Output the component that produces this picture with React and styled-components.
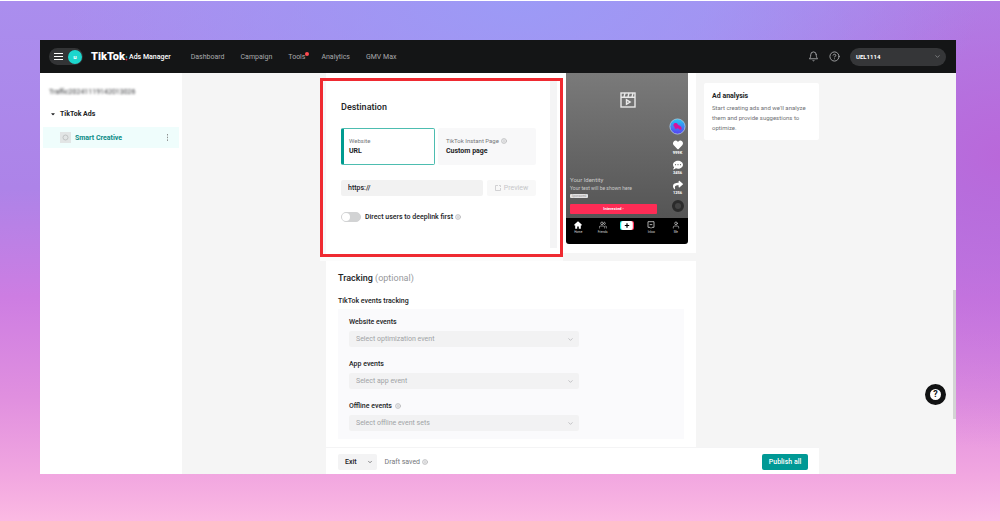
import { useState } from "react";
import styled, { createGlobalStyle } from "styled-components";
import { FiBell, FiHelpCircle, FiChevronDown, FiInfo, FiUser, FiUsers } from "react-icons/fi";
import { FaHeart, FaCommentDots, FaShare, FaCaretDown } from "react-icons/fa";

const GlobalStyle = createGlobalStyle`
  * {
    box-sizing: border-box;
  }
  body {
    margin: 0;
    font-family: Roboto, "Liberation Sans", sans-serif;
    font-size: 7px;
    line-height: 10px;
    color: #222325;
  }
  h1, h2, h3, p {
    margin: 0;
  }
  button, input, select {
    font: inherit;
    color: inherit;
    border: none;
    margin: 0;
    padding: 0;
  }
  button {
    cursor: pointer;
  }
  svg {
    display: block;
    flex-shrink: 0;
  }
`;

const Page = styled.div`
  min-height: 100vh;
  border-top: 1px solid white;
  padding: 39px 44px 47px 40px;
  background:
    radial-gradient(ellipse 46% 42% at 52% 0%, #9c9af6 0%, rgba(156, 154, 246, 0) 100%),
    radial-gradient(ellipse 34% 56% at 100% 30%, #b968da 0%, rgba(185, 104, 218, 0) 100%),
    linear-gradient(to bottom, #aa8eee 0%, #ad83e8 36%, #cd7de2 57%, #e08fdf 76%, #f1a6e0 91%, #fbb9e2 100%);
`;

const AppWindow = styled.div`
  background-color: #f5f5f5;
  position: relative;
`;

const Header = styled.header`
  height: 33px;
  background-color: #141516;
  color: #a9aaac;
  display: flex;
  align-items: center;
  padding: 0 10px 0 9px;
`;

const MenuButton = styled.button`
  height: 17px;
  border-radius: 9px;
  background-color: #333436;
  display: flex;
  align-items: center;
  gap: 5px;
  padding: 0 1px 0 5px;
  color: white;
`;

const Avatar = styled.span`
  width: 14px;
  height: 14px;
  border-radius: 50%;
  background-color: #1cd6cd;
  font-size: 6px;
  line-height: 14px;
  font-weight: 700;
  text-align: center;
`;

const Logo = styled.div`
  display: flex;
  align-items: center;
  margin-left: 8px;
  color: white;
  font-weight: 500;
`;

const Brand = styled.span`
  font-size: 11px;
  font-weight: 900;
`;

const Nav = styled.nav`
  display: flex;
  gap: 16px;
  margin-left: 20px;
  flex: 1;
`;

const NavLink = styled.a`
  color: inherit;
  text-decoration: none;
  position: relative;
`;

const Dot = styled.span`
  position: absolute;
  top: 0;
  right: -4px;
  width: 4px;
  height: 4px;
  border-radius: 50%;
  background-color: #fe4a4f;
`;

const HeaderActions = styled.div`
  display: flex;
  align-items: center;
  gap: 10px;
`;

const IconButton = styled.button`
  background: none;
`;

const Account = styled.button`
  width: 96px;
  height: 18px;
  border-radius: 9px;
  background-color: #353638;
  color: white;
  font-size: 6px;
  font-weight: 700;
  display: flex;
  align-items: center;
  justify-content: space-between;
  padding: 0 5px 0 6px;

  svg {
    color: #a9aaac;
  }
`;

const Body = styled.div`
  display: flex;
`;

const Sidebar = styled.aside`
  width: 142px;
  background-color: white;
  padding: 14px 3px 0;
`;

const CampaignName = styled.p`
  padding-left: 6px;
  color: #333437;
  filter: blur(1px);
`;

const Group = styled.div`
  display: flex;
  align-items: center;
  gap: 4px;
  margin-top: 12px;
  padding-left: 7px;
  font-weight: 700;
`;

const AdItem = styled.div`
  display: flex;
  align-items: center;
  gap: 4px;
  height: 21px;
  margin-top: 8px;
  padding: 0 9px 0 17px;
  background-color: #effdfc;
  color: #0a8b86;
  font-weight: 700;
`;

const Thumb = styled.span`
  width: 11px;
  height: 11px;
  background-color: #e2e5e5;
  display: flex;
  align-items: center;
  justify-content: center;
  color: #b3b6b6;
`;

const MoreButton = styled.button`
  background: none;
  margin-left: auto;
  color: #8d9090;
`;

const Main = styled.main`
  flex: 1;
  display: flex;
  justify-content: center;
  padding-left: 7px;
`;

const Workspace = styled.div`
  width: 100%;
  max-width: 493px;
`;

const Columns = styled.div`
  display: flex;
  align-items: flex-start;
  gap: 8px;
`;

const Column = styled.div`
  flex: 1;
`;

const TopRow = styled.section`
  display: flex;
  align-items: flex-start;
  background-color: white;
  padding: 0 8px 9px 0;
  margin-bottom: 8px;
`;

const Highlight = styled.div`
  flex: 1;
  display: flex;
  margin: 5px 3px -13px -6px;
  border: 3px solid #ef2a31;
  background-color: white;
  box-shadow: 0 4px #fcfcfc;
  position: relative;
`;

const Gutter = styled.div`
  width: 7px;
  margin: 0 3px 6px 0;
  background-color: #f4f4f5;
`;

const Destination = styled.form`
  flex: 1;
  border-left: 3px solid #f7f7fa;
  padding: 20px 14px 32px 15px;
`;

const Title = styled.h2`
  font-size: 9px;
  line-height: 12px;
  font-weight: 500;
`;

const Muted = styled.span`
  color: #97999c;
  font-weight: 400;
`;

const Options = styled.div`
  display: grid;
  grid-template-columns: 47fr 49fr;
  gap: 3px;
  margin-top: 15px;
`;

const Option = styled.label`
  height: 37px;
  padding: 7px 0 0 5px;
  border-radius: 2px;
  border: 1px solid ${(props) => (props.$active ? "#4dbdb0" : "#f8f8f9")};
  border-left: 3px solid ${(props) => (props.$active ? "#009b90" : "#f8f8f9")};
  background-color: ${(props) => (props.$active ? "white" : "#f8f8f9")};
  font-weight: 700;
  cursor: pointer;

  input {
    position: absolute;
    opacity: 0;
  }
`;

const OptionHint = styled.span`
  display: flex;
  align-items: center;
  gap: 2px;
  font-size: 6px;
  font-weight: 400;
  color: #77797c;
`;

const UrlRow = styled.div`
  display: flex;
  gap: 4px;
  margin-top: 15px;
`;

const UrlInput = styled.input`
  flex: 1;
  min-width: 0;
  height: 16px;
  padding: 0 7px;
  border-radius: 2px;
  background-color: #f2f2f2;
  font-weight: 500;
`;

const PreviewButton = styled.button`
  width: 49px;
  height: 16px;
  border-radius: 2px;
  background-color: #f8f8f8;
  color: #c6c7c9;
  display: flex;
  align-items: center;
  justify-content: center;
  gap: 3px;
`;

const SwitchRow = styled.label`
  display: flex;
  align-items: center;
  margin-top: 16px;
  font-weight: 500;
`;

const Switch = styled.input`
  appearance: none;
  width: 20px;
  height: 10px;
  margin-right: 4px;
  border-radius: 5px;
  background-color: #d2d3d4;
  border: 1px solid #d2d3d4;
  display: flex;

  &::before {
    content: "";
    width: 8px;
    height: 8px;
    border-radius: 50%;
    background-color: white;
  }
  &:checked {
    background-color: #009995;
    border-color: #009995;
    justify-content: flex-end;
  }
`;

const InfoIcon = styled(FiInfo)`
  width: 6px;
  height: 6px;
  color: #a5a7a9;
  fill: #ebebec;
`;

const Phone = styled.div`
  width: 122px;
  border-radius: 0 0 3px 3px;
  overflow: hidden;
  background-color: black;
  color: white;
`;

const Screen = styled.div`
  height: 145px;
  padding: 19px 2px 6px 4px;
  background: linear-gradient(to bottom, #7a7a7a, #555555);
  display: flex;
  flex-direction: column;
  align-items: center;
  justify-content: space-between;
`;

const Overlay = styled.div`
  align-self: stretch;
  display: flex;
  align-items: flex-end;
  justify-content: space-between;
`;

const Caption = styled.div`
  width: 87px;
  margin-bottom: -2px;
  font-size: 5px;
  line-height: 8px;
  color: #c9c9c9;
`;

const Identity = styled.p`
  font-size: 6px;
`;

const CaptionText = styled.p`
  font-size: 5px;
`;

const Sponsored = styled.span`
  display: block;
  width: 18px;
  height: 4px;
  margin: 2px 0 6px;
  border-radius: 1px;
  background-color: #e2e2e2;
  color: #999999;
  font-size: 3px;
  line-height: 4px;
  text-align: center;
`;

const Interested = styled.button`
  display: block;
  width: 100%;
  height: 10px;
  border-radius: 1px;
  background-color: #fe2c55;
  color: white;
  font-size: 4px;
  font-weight: 700;
`;

const Rail = styled.div`
  width: 17px;
  display: flex;
  flex-direction: column;
  align-items: center;
  gap: 5px;
`;

const RailItem = styled.span`
  display: flex;
  flex-direction: column;
  align-items: center;
  font-size: 4px;
  font-weight: 700;
  line-height: 5px;
`;

const Disc = styled.span`
  width: 12px;
  height: 12px;
  border-radius: 50%;
  border: 3px solid #2b2b2b;
  background-color: #444444;
`;

const Tabs = styled.div`
  height: 26px;
  padding: 3px 0 0;
  display: flex;
`;

const Tab = styled.span`
  flex: 1;
  display: flex;
  flex-direction: column;
  align-items: center;
  gap: 1px;
  font-size: 3px;
  line-height: 4px;
  color: #d5d5d5;
`;

const Tracking = styled.section`
  background-color: white;
  padding: 11px 12px 8px;
`;

const SubTitle = styled.h3`
  margin: 12px 0 3px;
  font-size: 7px;
  font-weight: 500;
`;

const Events = styled.div`
  display: flex;
  flex-direction: column;
  gap: 12px;
  padding: 8px 11px;
  background-color: #fafafc;
`;

const FieldLabel = styled.label`
  display: flex;
  align-items: center;
  gap: 3px;
  font-weight: 500;
`;

const SelectBox = styled.div`
  display: flex;
  align-items: center;
  width: 100%;
  max-width: 230px;
  height: 16px;
  margin-top: 4px;
  padding-right: 5px;
  border-radius: 2px;
  background-color: #f2f2f3;
  color: #a0a2a5;
`;

const Select = styled.select`
  appearance: none;
  flex: 1;
  height: 16px;
  padding-left: 7px;
  background: none;
`;

const Analysis = styled.aside`
  width: 115px;
  margin-top: 10px;
  padding: 8px 8px 7px;
  border-radius: 2px;
  background-color: white;
`;

const AnalysisTitle = styled.h3`
  font-size: 7px;
  font-weight: 700;
  margin-bottom: 2px;
`;

const AnalysisText = styled.p`
  font-size: 6px;
  color: #6f7174;
`;

const Footer = styled.footer`
  display: flex;
  align-items: center;
  height: 27px;
  padding: 2px 11px 0 12px;
  border-top: 1px solid #f4f4f5;
  background-color: white;
`;

const Split = styled.div`
  display: flex;
  height: 16px;
  border-radius: 2px;
  background-color: #f3f3f4;
`;

const SplitButton = styled.button`
  background: none;
  padding: 0 4px 0 ${(props) => (props.$caret ? "6px" : "7px")};
  font-weight: 500;
`;

const Draft = styled.p`
  display: flex;
  align-items: center;
  gap: 2px;
  margin-left: 8px;
  color: #76787b;
`;

const Publish = styled.button`
  width: 46px;
  height: 16px;
  margin-left: auto;
  border-radius: 2px;
  background-color: #009995;
  color: white;
  font-weight: 500;
`;

const HelpButton = styled.button`
  position: absolute;
  right: 10px;
  bottom: 69px;
  width: 21px;
  height: 21px;
  border-radius: 50%;
  border: 5px solid #111213;
  background-color: white;
  color: #111213;
  font-size: 9px;
  line-height: 11px;
  font-weight: 700;
`;

const ScrollThumb = styled.div`
  position: absolute;
  right: 0;
  bottom: 55px;
  width: 3px;
  height: 129px;
  background-color: #d3d4d4;
`;

const navItems = ["Dashboard", "Campaign", "Tools", "Analytics", "GMV Max"];

const events = [
  { id: "website", label: "Website events", placeholder: "Select optimization event" },
  { id: "app", label: "App events", placeholder: "Select app event" },
  { id: "offline", label: "Offline events", placeholder: "Select offline event sets", info: true },
];

const MenuIcon = () => (
  <svg width="9" height="8" viewBox="0 0 9 8" stroke="currentColor">
    <path d="M0 .5h9M0 3.5h9M0 6.500h9" />
  </svg>
);

const LogoMark = () => (
  <svg width="4" height="8" viewBox="0 0 4 8">
    <circle cx="1.500" cy="4" r="0.9" fill="#2ba5a8" />
    <circle cx="1.500" cy="6.500" r="0.9" fill="#d02a4e" />
  </svg>
);

const ClipIcon = () => (
  <svg width="16" height="16" viewBox="0 0 16 16" fill="none" stroke="#e8e8e8" strokeWidth="1.4">
    <rect x="1" y="1" width="14" height="14" />
    <path d="M1 5.2h14M5 1l-1 4M9 1L8 5M13 1l-1 4" />
    <path d="M6.5 7.8v4.4l3.6-2.2z" />
  </svg>
);

const ProfileIcon = () => (
  <svg width="17" height="17" viewBox="0 0 17 17">
    <defs>
      <linearGradient id="profile" x1="0" y1="0" x2="0" y2="1">
        <stop offset="0" stopColor="#22cdf5" />
        <stop offset="1" stopColor="#5a3df2" />
      </linearGradient>
    </defs>
    <circle cx="8.5" cy="8.5" r="7.6" fill="url(#profile)" stroke="#a9c8e8" strokeWidth="0.8" />
    <path d="M4.500 6.500c1-2 3.500-1.800 4.200-.2.500 1.200 1.800 1 2.800 1.900 1.200 1 1.500 2.600.6 3.300-1 .7-2-.2-2.800-1-.8-.7-1.400.6-2.600.4-1.200-.2-.8-1.500-1.500-2.300-.5-.6-1.100-1.200-.7-2.100z" fill="#d6129c" />
  </svg>
);

const PreviewIcon = () => (
  <svg width="6" height="6" viewBox="0 0 6 6" fill="none" stroke="currentColor" strokeWidth="0.8">
    <path d="M3 .5H.5v5h5V3M4 .5h1.500V2" />
  </svg>
);

const HomeIcon = () => (
  <svg width="8" height="8" viewBox="0 0 8 8" fill="white">
    <path d="M4 .3L.3 3.500V4.500h.9v3.200h2V5.500h1.600v2.200h2V4.500h.9V3.500z" />
  </svg>
);

const AddIcon = () => (
  <svg width="14" height="9" viewBox="0 0 14 9">
    <rect x="0" width="10" height="9" rx="2" fill="#25f4ee" />
    <rect x="4" width="10" height="9" rx="2" fill="#fe2c55" />
    <rect x="1.200" width="11.600" height="9" rx="2" fill="white" />
    <path d="M7 2.300v4.400M4.800 4.500h4.400" stroke="black" strokeWidth="1.200" />
  </svg>
);

const InboxIcon = () => (
  <svg width="8" height="8" viewBox="0 0 7 8" fill="none" stroke="#d5d5d5" strokeWidth="0.8">
    <path d="M.5.7h6v5.600H4.500l-1 1-1-1H.5zM2.200 3.600h2.600" />
  </svg>
);

const App = () => {
  const [target, setTarget] = useState("url");
  const [url, setUrl] = useState("https://");

  return (
    <Page>
      <GlobalStyle />
      <AppWindow>
        <Header>
          <MenuButton aria-label="Menu">
            <MenuIcon />
            <Avatar>u</Avatar>
          </MenuButton>
          <Logo>
            <Brand>TikTok</Brand>
            <LogoMark />
            Ads Manager
          </Logo>
          <Nav>
            {navItems.map((item) => (
              <NavLink href="#" key={item}>
                {item}
                {item === "Tools" && <Dot />}
              </NavLink>
            ))}
          </Nav>
          <HeaderActions>
            <IconButton aria-label="Notifications">
              <FiBell size={11} />
            </IconButton>
            <IconButton aria-label="Help">
              <FiHelpCircle size={11} />
            </IconButton>
            <Account>
              UEL1114
              <FiChevronDown size={7} />
            </Account>
          </HeaderActions>
        </Header>

        <Body>
          <Sidebar>
            <CampaignName>Traffic20241119142013026</CampaignName>
            <Group>
              <FaCaretDown size={6} />
              TikTok Ads
            </Group>
            <AdItem>
              <Thumb>
                <svg width="7" height="7" viewBox="0 0 7 7" fill="none" stroke="currentColor" strokeWidth="0.7">
                  <circle cx="3.5" cy="3.5" r="2.5" />
                </svg>
              </Thumb>
              Smart Creative
              <MoreButton aria-label="More">
                <svg width="5" height="7" viewBox="0 0 5 7" fill="currentColor">
                  <rect x="2" y="0" width="1" height="1.500" />
                  <rect x="2" y="2.700" width="1" height="1.500" />
                  <rect x="2" y="5.400" width="1" height="1.500" />
                </svg>
              </MoreButton>
            </AdItem>
          </Sidebar>

          <Main>
            <Workspace>
              <Columns>
                <Column>
                  <TopRow>
                    <Highlight>
                      <Destination>
                        <Title>Destination</Title>
                        <Options>
                          <Option $active={target === "url"}>
                            <input type="radio" name="target" checked={target === "url"} onChange={() => setTarget("url")} />
                            <OptionHint>Website</OptionHint>
                            URL
                          </Option>
                          <Option $active={target === "page"}>
                            <input type="radio" name="target" checked={target === "page"} onChange={() => setTarget("page")} />
                            <OptionHint>
                              TikTok Instant Page <InfoIcon />
                            </OptionHint>
                            Custom page
                          </Option>
                        </Options>
                        <UrlRow>
                          <UrlInput aria-label="URL" value={url} onChange={(e) => setUrl(e.target.value)} />
                          <PreviewButton type="button" disabled>
                            <PreviewIcon />
                            Preview
                          </PreviewButton>
                        </UrlRow>
                        <SwitchRow>
                          <Switch type="checkbox" />
                          Direct users to deeplink first&nbsp;
                          <InfoIcon />
                        </SwitchRow>
                      </Destination>
                      <Gutter />
                    </Highlight>

                    <Phone>
                      <Screen>
                        <ClipIcon />
                        <Overlay>
                          <Caption>
                            <Identity>Your Identity</Identity>
                            <CaptionText>Your text will be shown here</CaptionText>
                            <Sponsored>Sponsored</Sponsored>
                            <Interested>Interested ›</Interested>
                          </Caption>
                          <Rail>
                            <ProfileIcon />
                            <RailItem>
                              <FaHeart size={10} />
                              999K
                            </RailItem>
                            <RailItem>
                              <FaCommentDots size={10} />
                              3456
                            </RailItem>
                            <RailItem>
                              <FaShare size={10} />
                              1256
                            </RailItem>
                            <Disc />
                          </Rail>
                        </Overlay>
                      </Screen>
                      <Tabs>
                        <Tab>
                          <HomeIcon />
                          Home
                        </Tab>
                        <Tab>
                          <FiUsers size={8} />
                          Friends
                        </Tab>
                        <Tab>
                          <AddIcon />
                        </Tab>
                        <Tab>
                          <InboxIcon />
                          Inbox
                        </Tab>
                        <Tab>
                          <FiUser size={8} />
                          Me
                        </Tab>
                      </Tabs>
                    </Phone>
                  </TopRow>

                  <Tracking>
                    <Title>
                      Tracking <Muted>(optional)</Muted>
                    </Title>
                    <SubTitle>TikTok events tracking</SubTitle>
                    <Events>
                      {events.map((item) => (
                        <div key={item.id}>
                          <FieldLabel htmlFor={item.id}>
                            {item.label}
                            {item.info && <InfoIcon />}
                          </FieldLabel>
                          <SelectBox>
                            <Select id={item.id}>
                              <option>{item.placeholder}</option>
                            </Select>
                            <FiChevronDown size={7} />
                          </SelectBox>
                        </div>
                      ))}
                    </Events>
                  </Tracking>
                </Column>

                <Analysis>
                  <AnalysisTitle>Ad analysis</AnalysisTitle>
                  <AnalysisText>
                    Start creating ads and we'll analyze them and provide suggestions to optimize.
                  </AnalysisText>
                </Analysis>
              </Columns>

              <Footer>
                <Split>
                  <SplitButton>Exit</SplitButton>
                  <SplitButton $caret aria-label="More exit options">
                    <FiChevronDown size={6} />
                  </SplitButton>
                </Split>
                <Draft>
                  Draft saved <InfoIcon />
                </Draft>
                <Publish>Publish all</Publish>
              </Footer>
            </Workspace>
          </Main>
        </Body>
        <HelpButton aria-label="Support">?</HelpButton>
        <ScrollThumb />
      </AppWindow>
    </Page>
  );
};

export default App;
